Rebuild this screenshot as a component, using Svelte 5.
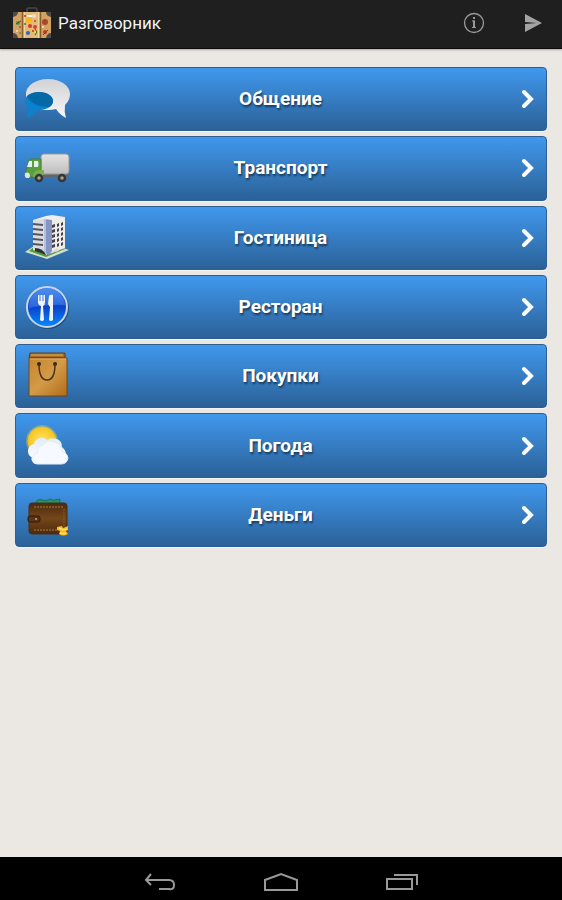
<script lang="ts">
	interface Category {
		id: string;
		title: string;
	}

	const categories: Category[] = [
		{ id: 'talk', title: 'Общение' },
		{ id: 'transport', title: 'Транспорт' },
		{ id: 'hotel', title: 'Гостиница' },
		{ id: 'restaurant', title: 'Ресторан' },
		{ id: 'shopping', title: 'Покупки' },
		{ id: 'weather', title: 'Погода' },
		{ id: 'money', title: 'Деньги' }
	];

	const floors = [0, 1, 2, 3, 4];

	// x, y, radius, colour
	const stickers: [number, number, number, string][] = [
		[13, 9, 1, '#c8301c'],
		[18, 9, 1, '#fff'],
		[22, 9, 2, '#f0dcc8'],
		[17, 13, 3, '#f5b81c'],
		[23, 14, 1, '#d63a22'],
		[13, 17, 1, '#2f8a3c'],
		[18, 19, 2, '#d63a22'],
		[23, 20, 2, '#d8452c'],
		[16, 26, 2, '#3a62b5'],
		[21, 24, 1, '#c8301c'],
		[24, 25, 2, '#f2d32c'],
		[33, 15, 3, '#a5482a'],
		[31, 20, 1, '#e8e0d0'],
		[33, 25, 2, '#c2382a'],
		[6, 16, 2, '#4f9848'],
		[8, 20, 1, '#cf3b25'],
		[5, 24, 1, '#e8e0d0'],
		[8, 26, 1, '#4f9848']
	];
</script>

<div class="screen">
	<header class="action-bar">
		<svg class="logo" viewBox="0 0 40 32" aria-hidden="true">
			<path d="M15 5V2q0-1 2-1h6q2 0 2 1v3" fill="none" stroke="#46484b" stroke-width="1.5" />
			<rect x="1" y="5" width="38" height="26" rx="2" fill="#d3a263" />
			<rect x="11" y="5" width="17" height="26" fill="#e2ba7c" />
			<path d="M10.500 5v26M28.500 5v26" stroke="#8b5c2a" stroke-width="1.500" />
			<path d="M12.500 5v26M26.500 5v26" stroke="#f0d5a0" />
			<path d="M15 8h9v2h-9z" fill="#f3ead9" />
			{#each stickers as [cx, cy, r, fill] (`${cx}-${cy}`)}
				<circle {cx} {cy} {r} {fill} />
			{/each}
			<path d="m4 17 5-3M31 28l5-5M23 22l2 3-2 3" stroke="#2d6131" stroke-width="1" fill="none" />
			<path d="M1 5h5q0 4-5 5zM39 5h-5q0 4 5 5zM1 31v-5q4 0 5 5zM39 31v-5q-4 0-5 5z" fill="#4b4c50" />
		</svg>
		<h1>Разговорник</h1>
		<button type="button" class="action" aria-label="О программе">
			<svg width="22" height="22" viewBox="0 0 22 22" fill="none" stroke="#999">
				<circle cx="11" cy="11" r="9.500" stroke-width="1.300" />
				<path d="M9 9h2v7M9 15.500h4" stroke-width="1.200" />
				<path d="M11 8.500V16" stroke-width="2" />
				<path d="M10 6h2" stroke-width="2" />
			</svg>
		</button>
		<button type="button" class="action" aria-label="Поделиться">
			<svg width="18" height="18" viewBox="0 0 18 18" fill="#a3a3a3">
				<path d="M1 0 18 9 1 18V10l12-1L1 8z" />
			</svg>
		</button>
	</header>

	<main>
		<ul class="menu">
			{#each categories as category (category.id)}
				<li>
					<button type="button" class="menu-item">
						<svg class="icon" viewBox="0 0 48 48" aria-hidden="true">
							{#if category.id === 'talk'}
								<defs>
									<linearGradient id="bubble" x2="0" y2="1">
										<stop stop-color="#d2d2d6" />
										<stop offset="1" stop-color="#f7f7f8" />
									</linearGradient>
								</defs>
								<path
									d="M25 4C12 4 3 11 3 19s9 16 22 16q4 0 8-1 4 6 10 9-2-6-1-13 5-5 5-11C47 11 38 4 25 4z"
									fill="url(#bubble)"
								/>
								<path
									d="M16 17c8 0 14 4 14 9s-6 9-14 9h-2q-4 6-10 8 2-6 1-12-3-2-3-5c0-5 6-9 14-9z"
									fill="#0b82ce"
								/>
								<path d="M4 21q5-4 12-4c8 0 14 4 14 9q0 4-4 6Q9 32 4 21z" fill="#0569a8" />
							{:else if category.id === 'transport'}
								<defs>
									<linearGradient id="cargo" x2="0" y2="1">
										<stop stop-color="#e4e4e4" />
										<stop offset="1" stop-color="#bdbdbd" />
									</linearGradient>
								</defs>
								<path d="M14 29h31v4H14z" fill="#62666b" />
								<rect x="18" y="10" width="28" height="20" rx="3" fill="url(#cargo)" stroke="#999" />
								<path d="M6 16q1-1 3-1h9v18H6q-3-1-3-5z" fill="#5b9e3c" stroke="#4a8033" />
								<path d="m6 17-2 6h5v-6zM11 17v6h4q1-3 0-6z" fill="#e1f1ef" />
								<path d="M10 33q0-7 7-7h4v5z" fill="#79b152" />
								<path d="M2 29q2-1 4 0 2 3 0 5H3q-2-2-1-5z" fill="#dce4e9" />
								<g fill="#aaa295" stroke="#383532" stroke-width="2.500">
									<circle cx="16" cy="34" r="3" />
									<circle cx="39" cy="34" r="3" />
								</g>
							{:else if category.id === 'hotel'}
								<path d="m2 38 22 7 22-9-12-4H11z" fill="#d8dccb" />
								<path d="m6 37 17 6 19-8-7-3H12z" fill="#4f9e37" />
								<path d="m10 6 14-3v38l-14-5z" fill="#dcdce0" />
								<path d="m26 4 16-1v31l-16 6z" fill="#eeece9" />
								<path d="m21 5 6-2 2 1v33l-3 4-5-3z" fill="#8795c5" />
								<path d="m21 5 2-1v36l-2-2z" fill="#b7c2e2" />
								<path d="m10 6 13-4 6-1 13 2-13 3-8-1z" fill="#eee" />
								{#each floors as floor (floor)}
									<g transform="translate(0 {floor * 5})">
										<path d="m10 9 10 1v2l-10-1z" fill="#56555d" />
										<path d="m29 11 3-1v3l-3 1zM34 10l2-1v3l-2 1zM38 9l2-1v3l-2 1z" fill="#45444b" />
									</g>
								{/each}
								<path d="M12 34q8 0 11 7l-11-4z" fill="#2e3232" />
								<path d="m28 39 6-5 2 3z" fill="#d8d9de" />
							{:else if category.id === 'restaurant'}
								<defs>
									<linearGradient id="plate" x2="0" y2="1">
										<stop stop-color="#3d85e8" />
										<stop offset="0.500" stop-color="#0a43cb" />
										<stop offset="1" stop-color="#078bff" />
									</linearGradient>
								</defs>
								<circle cx="25" cy="25" r="21" fill="#0f2c50" opacity="0.500" />
								<circle cx="24" cy="24" r="20" fill="url(#plate)" stroke="#c9d3ea" stroke-width="2" />
								<path d="M6 25a18 18 0 0 1 36-3Q25 21 6 25z" fill="#6ca6ff" opacity="0.350" />
								<path
									d="M15 12h1.500v6h1v-6h2v6h1v-6H22v7q0 3-2 4l1 14q-2 2-4 0l1-14q-3-1-3-4zM26 13q1-2 4-1v25q-2 2-4 0l1-13-2-3z"
									fill="#f0f3f7"
								/>
							{:else if category.id === 'shopping'}
								<defs>
									<linearGradient id="bag" x2="1" y2="1">
										<stop stop-color="#c7852e" />
										<stop offset="0.500" stop-color="#d39a48" />
										<stop offset="1" stop-color="#b06c18" />
									</linearGradient>
								</defs>
								<path d="M7 1h35v5H6z" fill="#a96920" stroke="#633e16" />
								<path d="M8 3h32" stroke="#dfb36b" />
								<path d="M6 6h38v38H6z" fill="url(#bag)" stroke="#704615" />
								<path d="M7 7h36" stroke="#e1b268" />
								<circle cx="16" cy="12" r="2" fill="#30291f" />
								<circle cx="32" cy="12" r="2" fill="#30291f" />
								<path d="M16 12c0 10 2 16 8 16s8-6 8-16" fill="none" stroke="#463416" stroke-width="1.500" />
							{:else if category.id === 'weather'}
								<defs>
									<linearGradient id="cloud" x2="0" y2="1">
										<stop stop-color="#e2ebf8" />
										<stop offset="1" stop-color="#fff" />
									</linearGradient>
									<radialGradient id="sun">
										<stop stop-color="#ffe568" />
										<stop offset="1" stop-color="#f7c51c" />
									</radialGradient>
								</defs>
								<circle cx="19" cy="19" r="16" fill="#f7d73d" opacity="0.350" />
								<circle cx="19" cy="19" r="14" fill="url(#sun)" stroke="#eac331" />
								<path
									d="M10 36q-6-3-5-8 1-5 6-6 1-5 6-6 4-1 7 2 5-3 10-1 5 2 5 8 4 3 4 8-1 6-7 6H15q-4 0-5-3z"
									fill="url(#cloud)"
								/>
								<path
									d="M9 38q-1-5 5-7 0-6 6-8 5-6 12-3 7 3 7 9 6 3 6 7-1 6-7 6H14q-4 0-5-4z"
									fill="#f6f9ff"
									stroke="#e4ecf8"
								/>
							{:else}
								<defs>
									<linearGradient id="leather" x2="0" y2="1">
										<stop stop-color="#4a2b0e" />
										<stop offset="0.500" stop-color="#754619" />
										<stop offset="1" stop-color="#4c2a0d" />
									</linearGradient>
								</defs>
								<path d="M13 14q0-7 6-5l4 1 4-2q3 2 5 1l5-1-1 6z" fill="#249768" stroke="#1a714d" />
								<rect x="6" y="12" width="38" height="31" rx="3" fill="url(#leather)" stroke="#4a2e14" />
								<path d="M11 16h29M11 39h24" stroke="#b07c40" stroke-dasharray="2 1" />
								<path d="M41 18v18" stroke="#8c592b" stroke-dasharray="2 1" />
								<rect x="5" y="25" width="12" height="6" rx="2" fill="#5a3416" stroke="#2e1a0c" />
								<circle cx="13" cy="28" r="1" fill="#c5a782" />
								<path d="m34 36 5-1 1 2 5-2v4l-2 1 2 3q-5 3-9 0l1-3-3-1z" fill="#ffb51a" />
								<path d="m36 37 4 2 4-1M37 42q4 1 6 0" fill="none" stroke="#ffe77a" stroke-width="1.500" />
							{/if}
						</svg>
						<span class="label">{category.title}</span>
						<svg class="chevron" viewBox="0 0 14 20" aria-hidden="true">
							<path d="m3 3 7 7-7 7" />
						</svg>
					</button>
				</li>
			{/each}
		</ul>
	</main>

	<nav class="system-bar">
		<button type="button" aria-label="Назад">
			<svg width="32" height="18" viewBox="0 0 32 18">
				<path d="M7 1 2 7l5 5M2 7h23q5 0 5 5t-5 4H15" />
			</svg>
		</button>
		<button type="button" aria-label="Домой">
			<svg width="36" height="20" viewBox="0 0 36 20">
				<path d="M2 18V8l16-6 16 6v10z" />
			</svg>
		</button>
		<button type="button" aria-label="Недавние приложения">
			<svg width="32" height="18" viewBox="0 0 32 18">
				<path d="M1 6h25v10H1zM8 2h23v10" />
			</svg>
		</button>
	</nav>
</div>

<style>
	:global(body) {
		margin: 0;
		background: #ebe7e3;
	}

	.screen {
		display: flex;
		flex-direction: column;
		min-height: 100vh;
		font-family: Roboto, 'Noto Sans', sans-serif;
	}

	button {
		padding: 0;
		border: none;
		background: none;
		font-family: inherit;
		cursor: pointer;
	}

	svg {
		display: block;
	}

	.action-bar {
		display: flex;
		align-items: center;
		box-sizing: border-box;
		height: 49px;
		padding: 0 0 3px 12px;
		background: #1f1f1f;
		border-bottom: 1px solid #0c0c0c;
		box-shadow: 0 1px 2px #aaa7a3;
	}

	.logo {
		width: 40px;
		height: 32px;
		flex: none;
	}

	h1 {
		flex: 1;
		margin: 0 0 0 6px;
		font-size: 17px;
		line-height: 24px;
		font-weight: 400;
		color: #f2f2f2;
	}

	.action {
		display: flex;
		align-items: center;
		justify-content: center;
		width: 59px;
		height: 45px;
	}

	main {
		flex: 1;
		padding: 18px 15px;
	}

	.menu {
		display: grid;
		grid-auto-rows: 1fr;
		gap: 5px;
		height: 480px;
		margin: 0;
		padding: 0;
		list-style: none;
	}

	.menu-item {
		display: flex;
		align-items: center;
		box-sizing: border-box;
		width: 100%;
		height: 100%;
		padding: 0 11px 0 7px;
		border: 1px solid #2c5f94;
		border-radius: 4px;
		background: linear-gradient(#4098ee, #2b6197);
		box-shadow: 0 1px 1px #f8f6f4;
	}

	.icon {
		width: 48px;
		height: 48px;
		flex: none;
	}

	.label {
		flex: 1;
		padding-right: 31px;
		font-size: 19px;
		line-height: 24px;
		font-weight: 700;
		text-align: center;
		color: #fff;
		text-shadow: 1px 2px 2px #173a5e;
	}

	.chevron {
		width: 14px;
		height: 20px;
		flex: none;
	}

	.chevron path {
		fill: none;
		stroke: #fff;
		stroke-width: 4;
		stroke-linecap: round;
	}

	.system-bar {
		display: flex;
		justify-content: center;
		gap: 57px;
		height: 42px;
		padding-top: 1px;
		background: #000;
	}

	.system-bar button {
		display: flex;
		align-items: center;
		justify-content: center;
		width: 64px;
		padding-top: 6px;
	}

	.system-bar path {
		fill: none;
		stroke: #999;
		stroke-width: 2;
	}
</style>
